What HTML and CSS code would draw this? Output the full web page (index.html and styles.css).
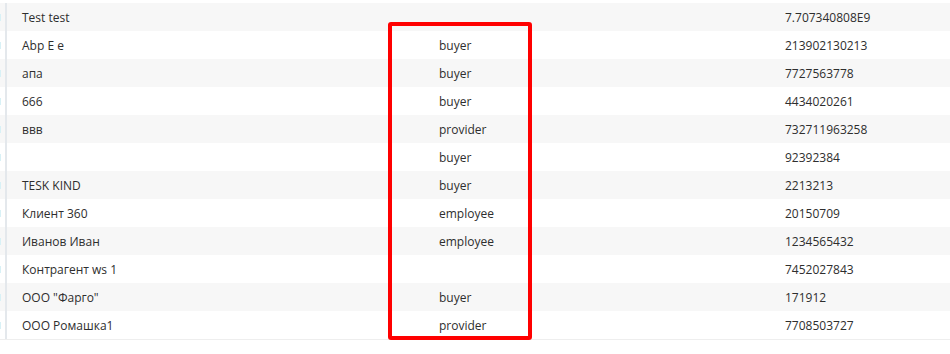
FILE: index.html
```html
<!DOCTYPE html>
<html>
<head>
<meta charset="utf-8">
<link rel="stylesheet" href="styles.css">
</head>
<body>
<div class="page">
  <div class="table">
    <div class="row odd"><div class="mark"></div><div class="cell">Test test</div><div class="cell"></div><div class="cell">7.707340808E9</div></div>
    <div class="row"><div class="mark"></div><div class="cell">Abp E e</div><div class="cell">buyer</div><div class="cell">213902130213</div></div>
    <div class="row odd"><div class="mark"></div><div class="cell">апа</div><div class="cell">buyer</div><div class="cell">7727563778</div></div>
    <div class="row"><div class="mark"></div><div class="cell">666</div><div class="cell">buyer</div><div class="cell">4434020261</div></div>
    <div class="row odd"><div class="mark"></div><div class="cell">ввв</div><div class="cell">provider</div><div class="cell">732711963258</div></div>
    <div class="row"><div class="mark"></div><div class="cell"></div><div class="cell">buyer</div><div class="cell">92392384</div></div>
    <div class="row odd"><div class="mark"></div><div class="cell">TESK KIND</div><div class="cell">buyer</div><div class="cell">2213213</div></div>
    <div class="row"><div class="mark"></div><div class="cell">Клиент 360</div><div class="cell">employee</div><div class="cell">20150709</div></div>
    <div class="row odd"><div class="mark"></div><div class="cell">Иванов Иван</div><div class="cell">employee</div><div class="cell">1234565432</div></div>
    <div class="row"><div class="mark"></div><div class="cell">Контрагент ws 1</div><div class="cell"></div><div class="cell">7452027843</div></div>
    <div class="row odd"><div class="mark"></div><div class="cell">ООО "Фарго"</div><div class="cell">buyer</div><div class="cell">171912</div></div>
    <div class="row"><div class="mark"></div><div class="cell">ООО Ромашка1</div><div class="cell">provider</div><div class="cell">7708503727</div></div>
  </div>
  <div class="highlight"></div>
</div>
</body>
</html>
```
FILE: styles.css
```css
html, body {
  margin: 0;
  padding: 0;
  background: #ffffff;
}
.page {
  position: relative;
  width: 950px;
  height: 354px;
  padding-top: 3px;
  box-sizing: border-box;
  font-family: "Open Sans", "Liberation Sans", sans-serif;
  font-size: 12px;
  color: #2e2e2e;
}
.table {
  border-bottom: 1px solid #eeeeee;
}
.row {
  display: grid;
  grid-template-columns: 5px 2px 417px 346px 1fr;
  height: 28px;
  align-items: center;
  background: #ffffff;
}
.row.odd {
  background: #f7f7f7;
}
.row::before {
  content: "";
  grid-column: 2;
  grid-row: 1;
  align-self: stretch;
  background: #e4e8ec;
}
.mark {
  grid-column: 1;
  grid-row: 1;
  width: 1px;
  height: 7px;
  background: #d8f1f6;
  align-self: center;
}
.cell {
  padding-left: 15px;
  padding-top: 1px;
  line-height: 27px;
  white-space: nowrap;
  font-weight: 500;
}
.highlight {
  position: absolute;
  left: 388px;
  top: 22px;
  width: 144px;
  height: 318px;
  box-sizing: border-box;
  border: 4px solid #ff0000;
  border-radius: 3px;
}
```
